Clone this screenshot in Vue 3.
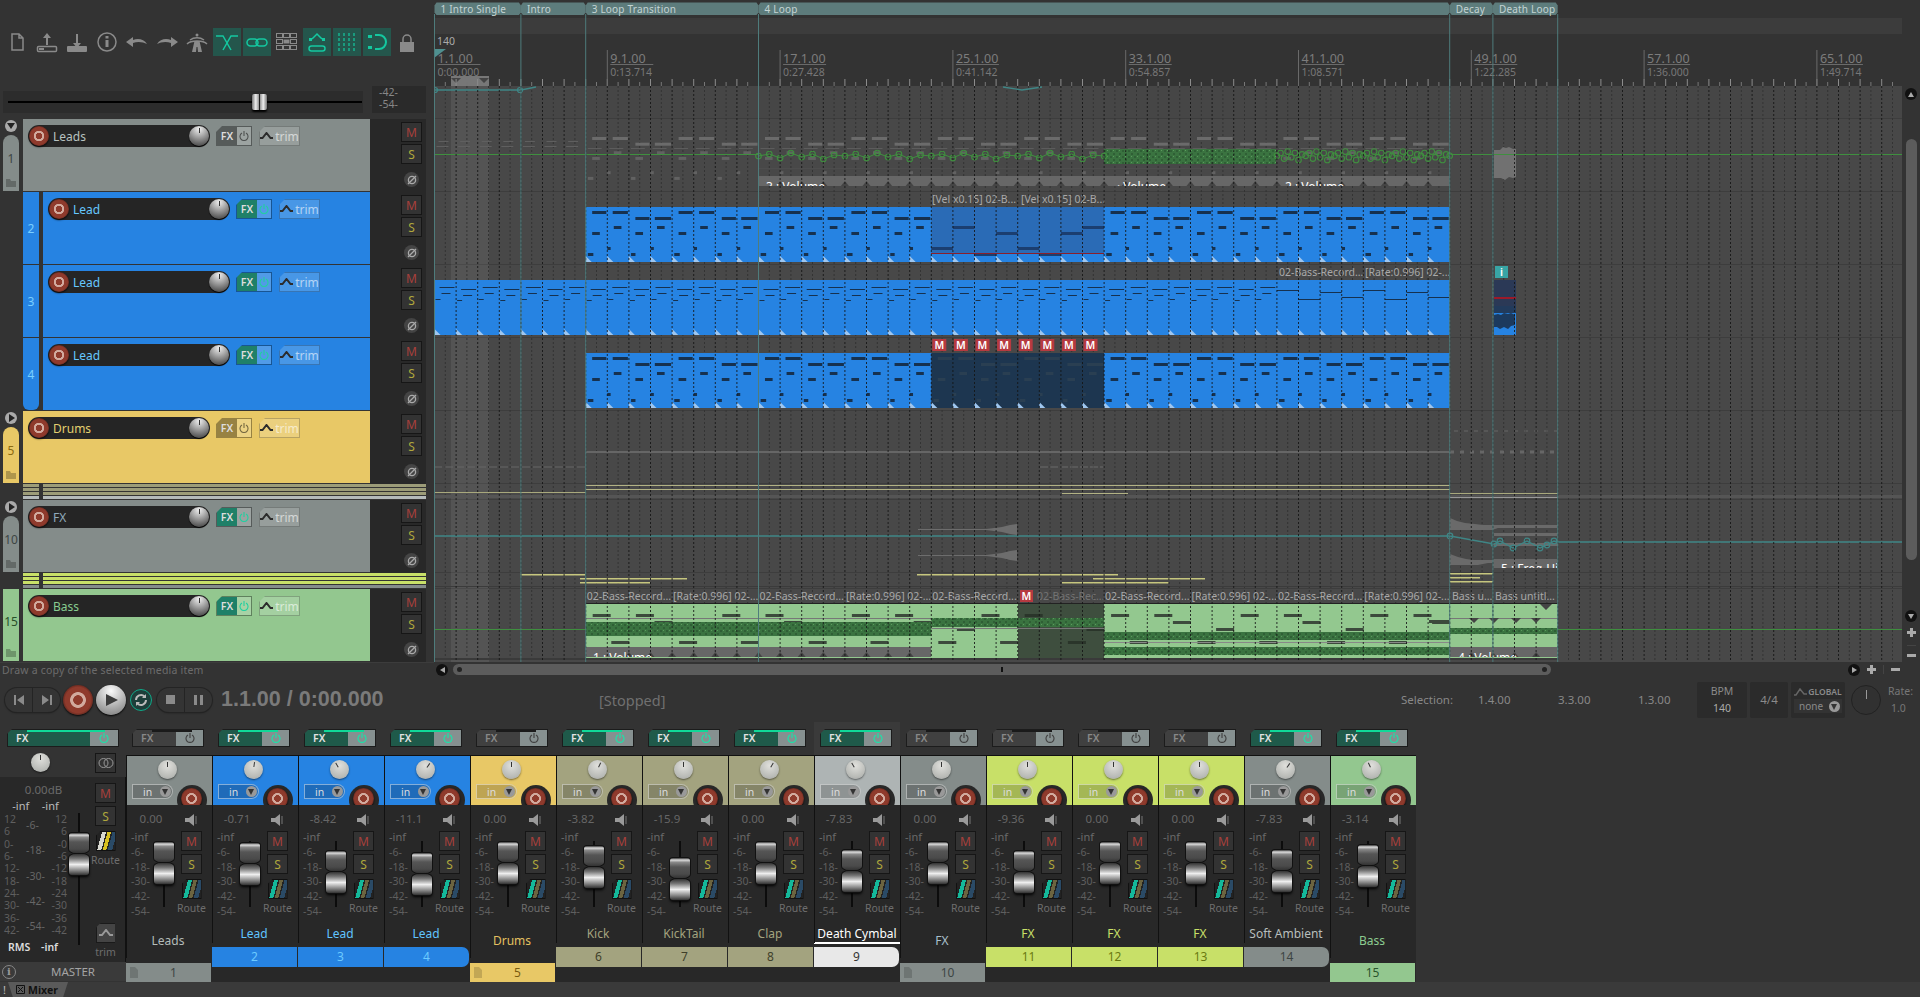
<template>
  <div class="app">
    <div class="main">
      <!-- left: toolbar + track panel -->
      <div class="left">
        <div class="toolbar">
          <div v-for="(ic, i) in toolIcons" :key="i" class="tool">
            <svg width="28" height="28" viewBox="0 0 28 28">
              <rect v-if="ic.on" width="28" height="28" fill="#24564c" />
              <g v-html="ic.svg"></g>
            </svg>
          </div>
        </div>
        <div class="master-row">
          <div class="master-fader">
            <div class="mf-line"></div>
            <div class="mf-handle"></div>
          </div>
          <div class="master-meter"><span>-42-</span><span>-54-</span></div>
        </div>
        <div class="tracks">
          <template v-for="t in tracks" :key="t.n">
            <div class="track">
              <div class="t-gutter">
                <template v-if="t.folder">
                  <div v-if="!t.bass" class="collapse"><i :class="{ closed: t.closed }"></i></div>
                  <div class="t-tab" :class="{ flat: t.bass }" :style="{ background: t.color, color: t.ink }">
                    <span>{{ t.n }}</span>
                    <svg class="fold" width="10" height="8" viewBox="0 0 10 8"><path d="M0 0h4l1 2h5v6H0z" fill="rgba(0,0,0,.25)" /></svg>
                  </div>
                </template>
              </div>
              <div v-if="!t.folder" class="t-num" :class="{ last: t.n === 4 }" :style="{ background: t.color, color: t.ink }">{{ t.n }}</div>
              <div class="t-panel" :class="{ child: !t.folder }" :style="{ background: t.color }">
                <div class="namebar">
                  <div class="rec small"></div>
                  <span class="tname" :style="{ color: t.nameColor }">{{ t.name }}</span>
                  <div class="knob dark"><i></i></div>
                </div>
                <div class="tfx" :class="{ active: t.fx }">
                  <b>FX</b>
                  <span><svg width="10" height="10" viewBox="0 0 10 10"><path d="M3 2a4 4 0 1 0 4 0M5 0v5" fill="none" stroke="currentColor" stroke-width="1.1" /></svg></span>
                </div>
                <div class="ttrim">
                  <svg width="13" height="8" viewBox="0 0 13 8"><path d="M0 6h2.5l4-5 4 5H13" fill="none" stroke="#2c2c2c" stroke-width="2" /></svg>
                  <span>trim</span>
                </div>
              </div>
              <div class="t-ms">
                <div class="btn m">M</div>
                <div class="btn s">S</div>
                <div class="phase"><svg width="10" height="10" viewBox="0 0 10 10"><circle cx="5" cy="5" r="3.6" fill="none" stroke="#aaa" stroke-width="1.3" /><path d="M1 9 9 1" stroke="#aaa" stroke-width="1.3" /></svg></div>
              </div>
            </div>
            <div v-if="t.kids" class="collapsed-kids">
              <div v-for="(c, k) in t.kids" :key="k" class="kid" :style="{ background: c }"><i></i></div>
            </div>
          </template>
        </div>
        <div class="hint">Draw a copy of the selected media item</div>
      </div>

      <!-- arrange view -->
      <div class="arrange">
        <svg class="canvas" width="1468" height="662" viewBox="434 0 1468 662">
          <defs>
            <clipPath v-for="(b, i) in bands" :id="'band' + i" :key="i"><rect :x="b.x1" :y="b.y" :width="b.x2 - b.x1" :height="b.h" /></clipPath>
            <pattern id="wave" width="6" height="6" patternUnits="userSpaceOnUse">
              <rect width="6" height="6" fill="#3a7340" />
              <rect x="0" y="0" width="2" height="2" fill="#2f5f35" />
              <rect x="3" y="3" width="2" height="2" fill="#2f5f35" />
              <rect x="3" y="0" width="1" height="1" fill="#5b9a5d" />
            </pattern>
          </defs>
          <!-- ruler -->
          <rect x="434" y="0" width="1468" height="86" fill="#333" />
          <rect x="434" y="18" width="1468" height="16" fill="#3c3c3c" />
          <rect x="434" y="86" width="1468" height="576" fill="#484848" />
          <rect x="434" y="86" width="1468" height="33" fill="#464646" />
          <rect v-for="y in laneLines" :key="y" x="434" :y="y" width="1468" height="1" fill="#3d3d3d" />
          <rect x="451" y="76" width="38" height="586" fill="#fff" opacity=".07" />
          <rect x="451" y="76" width="38" height="10" fill="#777" />
          <path d="M451 76h10l-5 5zM479 76h10l-5 5z" fill="#444" transform="translate(0 2)" />

          <g v-for="l in halfLines" :key="'h' + l">
            <line :x1="l" :x2="l" y1="82" y2="86" stroke="#777" />
            <line :x1="l" :x2="l" y1="86" y2="662" stroke="#333" stroke-dasharray="2 2" />
          </g>
          <g v-for="l in barLines" :key="'b' + l">
            <line :x1="l" :x2="l" y1="79" y2="86" stroke="#8c8c8c" />
          </g>
          <g v-for="r in rulerLabels" :key="r.label">
            <line :x1="r.x" :x2="r.x" y1="50" y2="86" stroke="#6a6a6a" />
            <text :x="r.x + 3" y="63" class="r1">{{ r.label }}</text>
            <rect :x="r.x + 3" y="64" width="43" height="1" fill="#6a6a6a" />
            <text :x="r.x + 3" y="76" class="r2">{{ r.time }}</text>
          </g>
          <text x="437" y="45" class="tempo">140</text>
          <path d="M434 49h12l-12 9z" fill="#4f9090" />

          <!-- faint folder peaks -->
          <rect v-for="(p, i) in peaks" :key="'p' + i" :x="p.x" :y="p.y" :width="p.w" :height="p.h" :fill="p.c" />
          <path d="M1494 150l6 0 3-3 3 1 3-1 4 2 3 0 0 28-3 1-4-1-4 3-4-2-7 0z" fill="#717171" />

          <!-- blue midi items -->
          <rect v-for="b in blue" :key="b.k" :x="b.x" :y="b.y" :width="b.w" :height="b.h" :fill="b.c" />
          <rect v-for="n in notes" :key="n.k" :x="n.x" :y="n.y" :width="n.w" :height="n.h" :fill="n.c" />
          <path v-for="t in fades" :key="t.k" :d="t.d" :fill="t.c" />
          <rect x="931" y="253" width="173" height="1" fill="#8a1f2c" />

          <text x="932" y="203" class="it">[Vel x0.15] 02-B...</text>
          <text x="1021" y="203" class="it">[Vel x0.15] 02-B...</text>
          <text x="1279" y="276" class="it">02-Bass-Record...</text>
          <text x="1365" y="276" class="it">[Rate:0.996] 02-...</text>

          <g v-for="x in muteBadges" :key="x">
            <rect :x="x" y="339" width="14" height="12" fill="#b63a40" />
            <text :x="x + 7" y="349" class="mm">M</text>
          </g>

          <!-- little clip on track 3 -->
          <rect x="1494" y="280" width="22" height="55" fill="#2683e2" />
          <rect x="1494" y="280" width="22" height="26" fill="#2b3956" />
          <rect x="1494" y="306" width="22" height="7" fill="#223b5c" />
          <rect x="1494" y="297" width="22" height="2" fill="#9c1a2a" />
          <path d="M1494 315l4-1 3 1 3-2 4 1 3-1 4 2v10l-4 1-3 3-4-2-4 2-3-2-3 0z" fill="#1c3a5e" />
          <rect x="1495" y="266" width="13" height="12" fill="#38a5a5" />
          <text x="1501.5" y="276" class="mm">i</text>

          <!-- drums lane -->
          <rect x="586" y="451" width="864" height="2" fill="#666" />
          <line x1="1450" x2="1556" y1="452" y2="452" stroke="#666" stroke-width="3" stroke-dasharray="4 6" />
          <line x1="1454" x2="1558" y1="431" y2="431" stroke="#666" stroke-dasharray="4 6" />
          <line x1="1040" x2="1104" y1="467" y2="467" stroke="#6a6a6a" stroke-dasharray="8 2" />
          <line x1="434" x2="586" y1="467" y2="467" stroke="#666" stroke-dasharray="8 3" />
          <rect x="586" y="485" width="864" height="1" fill="#b2b284" />
          <rect x="586" y="489" width="864" height="1" fill="#b2b284" />
          <rect x="434" y="495" width="1468" height="3" fill="#555" />
          <rect x="1450" y="493" width="108" height="1" fill="#a8a87c" />
          <rect x="1450" y="497" width="108" height="1" fill="#999" />
          <rect x="1062" y="493" width="66" height="1" fill="#b2b284" />
          <rect x="434" y="492" width="152" height="1" fill="#a8a87c" />

          <!-- fx lane -->
          <path d="M918 529h68l8-1 8-1 8-2 7-1v11l-7-1-8-2-8-1-8-1h-68z" fill="#6d6d6d" />
          <path d="M918 555h68l8-1 8-1 8-2 7-1v11l-7-1-8-2-8-1-8-1h-68z" fill="#6d6d6d" />
          <path d="M1450 518l7 3 8 2 10 1 8 1h75v3h-60l-6 2h-42z" fill="#6a6a6a" />
          <path d="M1450 572v-18l8 3 8 2 8 1h84v3h-70l-10 2h-28z" fill="#6a6a6a" />
          <rect x="1494" y="533" width="64" height="3" fill="#6a6a6a" />
          <rect x="1494" y="543" width="64" height="3" fill="#6a6a6a" />
          <polyline points="434,536 1450,536 1494,544 1500,541 1513,548 1527,541 1540,548 1547,545 1554,541 1558,542 1902,542" fill="none" stroke="#3f8686" stroke-width="1.3" />
          <circle v-for="p in fxPts" :key="p[0]" :cx="p[0]" :cy="p[1]" r="2.8" fill="none" stroke="#3f8686" stroke-width="1.2" />
          <rect v-for="(l, i) in yellow" :key="'y' + i" :x="l[0]" :y="l[2]" :width="l[1] - l[0]" height="1.5" fill="#c6c67e" />
          <rect x="434" y="586" width="1468" height="1" fill="#3b3b3b" />

          <!-- bass lane -->
          <rect x="586" y="604" width="972" height="54" fill="#93c88f" />
          <rect x="1018" y="604" width="86" height="54" fill="#3e4e3e" />
          <rect x="586" y="603" width="972" height="1" fill="#222" />
          <rect x="434" y="658" width="1124" height="2" fill="#3a3a3a" />
          <rect v-for="n in bassNotes" :key="n.k" :x="n.x" :y="n.y" :width="n.w" height="3" :fill="n.c" />
          <rect v-for="g in bassBands" :key="g.k" :x="g.x" :y="g.y" :width="g.w" :height="g.h" :fill="g.c" />
          <text v-for="l in bassLabels" :key="l.x" :x="l.x" y="600" class="it" :opacity="l.dim ? 0.45 : 1">{{ l.t }}</text>
          <rect x="1020" y="590" width="13" height="12" fill="#b63a40" />
          <text x="1026.5" y="600" class="mm">M</text>
          <path d="M1540 604h12l-6 6zM1469 618h10l-5 5zM1489 618h10l-5 5zM1511 618h10l-5 5zM1531 618h10l-5 5z" fill="#444" />

          <!-- automation -->
          <polyline points="434,90 521,90 536,87" fill="none" stroke="#3f8686" stroke-width="1.3" />
          <polyline points="1003,87 1022,90 1042,87" fill="none" stroke="#3f8686" stroke-width="1.3" />
          <circle cx="435" cy="90" r="2.5" fill="none" stroke="#3f8686" stroke-width="1.2" />
          <circle cx="520" cy="90" r="2.5" fill="none" stroke="#3f8686" stroke-width="1.2" />
          <rect x="434" y="154" width="325" height="1" fill="#3f8f3f" />
          <rect x="1450" y="154" width="452" height="1" fill="#3f8f3f" />
          <rect x="434" y="629" width="152" height="1" fill="#3f8f3f" />
          <rect x="1558" y="629" width="344" height="1" fill="#3f8f3f" />
          <rect x="1104" y="149" width="172" height="15" fill="url(#wave)" />
          <polyline :points="greenLine" fill="none" stroke="#3f8f3f" stroke-width="1" />
          <circle v-for="p in greenPts" :key="p[2]" :cx="p[0]" :cy="p[1]" r="2.8" fill="none" stroke="#3f8f3f" stroke-width="1.1" />

          <!-- envelope name bands, text cut by the band as in the original -->
          <g v-for="(b, i) in bands" :key="'v' + i" :clip-path="'url(#band' + i + ')'">
            <rect :x="b.x1" :y="b.y" :width="b.x2 - b.x1" :height="b.h" fill="#676767" />
            <path v-for="x in b.marks" :key="x" :d="`M${x - 4} ${b.y + b.h}l4 -5 4 5z`" fill="#444" />
            <text v-for="l in b.labels" :key="l[0]" :x="l[0]" :y="b.y + b.h + 5" class="vl">{{ l[1] }}</text>
          </g>

          <!-- grid on top -->
          <line v-for="l in barLines" :key="'g' + l" :x1="l" :x2="l" y1="86" y2="662" stroke="#141414" stroke-dasharray="2 2" opacity=".85" />

          <!-- region markers -->
          <line v-for="x in regionLines" :key="'r' + x" :x1="x" :x2="x" y1="14" y2="662" stroke="#4e7c7c" />
          <g v-for="r in regions" :key="r.label">
            <path :d="`M${r.x1 + 2} 2.5H${r.x2 - 2}l2 3v7l-2 2.5H${r.x1 + 2}l-2 -2.5v-7z`" fill="#5d7c7c" />
            <text :x="r.x1 + 6" y="12.5" class="reg">{{ r.label }}</text>
          </g>
        </svg>

        <div class="hscroll">
          <div class="round"><i class="tl"></i></div>
          <div class="hbar">
            <em class="dot"></em>
            <u class="hmid"></u>
            <em class="dot"></em>
          </div>
          <div class="round play"><i class="tr"></i></div>
          <div class="plus"></div>
          <div class="vsep"></div>
          <div class="minus"></div>
        </div>
      </div>

      <div class="vscroll">
        <div class="round up"><i class="tu"></i></div>
        <div class="vbar"></div>
        <div class="round down"><i class="td"></i></div>
        <div class="plus"></div>
        <div class="hsep"></div>
        <div class="minus"></div>
      </div>
    </div>

    <!-- transport -->
    <div class="transport">
      <div class="tgroup first">
        <span><svg width="12" height="12" viewBox="0 0 12 12"><path d="M1 1h2v10H1zM11 1v10L4 6z" fill="#8a8a8a" /></svg></span>
        <span><svg width="12" height="12" viewBox="0 0 12 12"><path d="M1 1v10l7-5zM9 1h2v10H9z" fill="#8a8a8a" /></svg></span>
      </div>
      <div class="rec big"></div>
      <div class="playbtn"><svg width="14" height="14" viewBox="0 0 14 14"><path d="M1 1l12 6-12 6z" fill="#3c3c3c" /></svg></div>
      <div class="loopbtn"><svg width="14" height="14" viewBox="0 0 14 14"><path d="M2 7a5 5 0 0 1 8.5-3.5M12 7a5 5 0 0 1-8.5 3.5" fill="none" stroke="#bbb" stroke-width="2" /><path d="M12 1v4H8zM2 13V9h4z" fill="#bbb" /></svg></div>
      <div class="tgroup">
        <span><i class="stop"></i></span>
        <span><i class="pause"></i></span>
      </div>
      <div class="bigtime">1.1.00 / 0:00.000</div>
      <div class="stopped">[Stopped]</div>
      <div class="sel sel-l">Selection:</div>
      <div class="sel s1">1.4.00</div>
      <div class="sel s2">3.3.00</div>
      <div class="sel s3">1.3.00</div>
      <div class="box bpm"><span>BPM</span><span class="lt">140</span></div>
      <div class="box sig">4/4</div>
      <div class="box glob">
        <div class="g1"><svg width="13" height="8" viewBox="0 0 13 8"><path d="M0 7h2l4-6 4 5h3" fill="none" stroke="#666" stroke-width="1.5" /></svg><b>GLOBAL</b></div>
        <div class="g2"><span>none</span><i class="caret"></i></div>
      </div>
      <div class="rateknob"><i></i></div>
      <div class="rate"><span>Rate:</span><span class="rv">1.0</span></div>
    </div>

    <!-- mixer -->
    <div class="mixer">
      <div class="m-master">
        <div class="fx-slot"><div class="mfx wide active"><b>FX</b><span><svg width="10" height="10" viewBox="0 0 10 10"><path d="M3 2a4 4 0 1 0 4 0M5 0v5" fill="none" stroke="currentColor" stroke-width="1.2" /></svg></span><em></em></div></div>
        <div class="m-top">
          <div class="knob metal"><i></i></div>
          <div class="btn stereo"><svg width="16" height="10" viewBox="0 0 16 10"><circle cx="5.5" cy="5" r="4.5" fill="none" stroke="#999" /><circle cx="10.5" cy="5" r="4.5" fill="none" stroke="#999" /></svg></div>
        </div>
        <div class="m-body">
          <div class="m-left">
            <div class="db">0.00dB</div>
            <div class="inf-row"><span>-inf</span><span>-inf</span></div>
            <div class="m-scale">
              <div class="sc"><span v-for="s in masterL" :key="s">{{ s }}</span></div>
              <div class="sc mid"><span v-for="s in masterM" :key="s">{{ s }}</span></div>
              <div class="sc right"><span v-for="s in masterR" :key="s">{{ s }}</span></div>
            </div>
            <div class="rms-row"><b>RMS</b><b>-inf</b></div>
          </div>
          <div class="m-fader"><div class="fader-track"></div><div class="fader" style="top: 56px"><div class="cap-t"></div><div class="cap-b"></div></div></div>
          <div class="m-right">
            <div class="btn m">M</div>
            <div class="btn s">S</div>
            <div class="route master-route"></div>
            <div class="route-l">Route</div>
            <div class="spacer"></div>
            <div class="trimbtn"><svg width="14" height="8" viewBox="0 0 14 8"><path d="M0 6h3l4-5 4 5h3" fill="none" stroke="#999" stroke-width="2" /></svg></div>
            <div class="route-l">trim</div>
          </div>
        </div>
        <div class="m-name">
          <div class="info">i</div>
          <span>MASTER</span>
        </div>
      </div>

      <div v-for="c in channels" :key="c.n" class="ch" :class="{ folder: c.folder, sel: c.sel }">
        <div class="fx-slot"><div class="mfx" :class="{ active: c.fx }"><b>FX</b><span><svg width="10" height="10" viewBox="0 0 10 10"><path d="M3 2a4 4 0 1 0 4 0M5 0v5" fill="none" stroke="currentColor" stroke-width="1.2" /></svg></span><em></em></div></div>
        <div class="ch-head" :style="{ background: c.color }">
          <div class="knob metal"><i :style="{ transform: `rotate(${c.pan}deg)` }"></i></div>
          <div class="in-pill"><span>in</span><i class="caret"></i></div>
          <div class="notch"></div>
        </div>
        <div class="rec chrec"></div>
        <div class="ch-body">
          <div class="ch-top">
            <span class="vol">{{ c.vol }}</span>
            <svg class="spk" width="12" height="12" viewBox="0 0 12 12"><path d="M0 4h4l5-4v12L4 8H0z" fill="#9a9a9a" /><rect x="10.5" y="2" width="1" height="8" fill="#777" /></svg>
          </div>
          <div class="ch-mid">
            <div class="scale"><span v-for="s in scale" :key="s">{{ s }}</span></div>
            <div class="ch-fader">
              <div class="fader-track"></div>
              <div class="fader" :style="{ top: c.fader - 831 + 'px' }"><div class="cap-t"></div><div class="cap-b"></div></div>
            </div>
            <div class="ch-btns">
              <div class="btn m">M</div>
              <div class="btn s">S</div>
              <div class="route"></div>
              <div class="route-l">Route</div>
            </div>
          </div>
          <div class="ch-bottom">
            <div class="ch-name" :class="{ under: c.sel }" :style="{ color: c.nameColor }">{{ c.name }}</div>
            <div class="band" :class="{ rounded: c.last, hasfold: c.folder && c.n !== 15 }" :style="{ background: c.band || c.color, color: c.ink }">
              <svg v-if="c.folder && c.n !== 15" class="fold" width="8" height="11" viewBox="0 0 8 11"><path d="M0 0h5l3 3v8H0z" fill="rgba(0,0,0,.16)" /></svg>
              {{ c.n }}
            </div>
          </div>
        </div>
      </div>
    </div>

    <div class="tabs">
      <span class="bang">!</span>
      <div class="tab">
        <svg width="9" height="9" viewBox="0 0 9 9"><path d="M.5.5h8v8h-8zM2 2l5 5M7 2 2 7" fill="none" stroke="#111" /></svg>
        <b>Mixer</b>
      </div>
    </div>
  </div>
</template>

<script setup>
const X0 = 434.5
const BAR = 21.6
const bx = (b) => X0 + b * BAR

const GRAY = '#848c8a'
const BLUE = '#2683e2'
const YEL = '#e8c866'
const OLIVE = '#a3a37f'
const LIME = '#c8e068'
const GREEN = '#93c78f'

const tg = 'stroke="#8a8a8a" fill="none" stroke-width="1.5"'
const gf = 'fill="#8a8a8a"'
const ac = 'stroke="#14c8a0" fill="none" stroke-width="2"'
const toolIcons = [
  { svg: `<path d="M9 6h7l4 4v12H9zM16 6v4h4" ${tg}/>` },
  { svg: `<path d="M14 5l-4 5h3v7h2v-7h3z" ${gf}/><rect x="4.5" y="18.5" width="19" height="5" rx="1" ${tg}/><rect x="6" y="20" width="5" height="2" ${gf}/>` },
  { svg: `<path d="M14 20l-4-5h3V6h2v9h3z" ${gf}/><rect x="4" y="18" width="20" height="6" rx="1" ${gf}/>` },
  { svg: `<circle cx="14" cy="14" r="9" ${tg}/><rect x="12.5" y="12" width="3" height="7" ${gf}/><rect x="12.5" y="8" width="3" height="2.5" ${gf}/>` },
  { svg: `<path d="M3 14l7-5v3c5-2 11-1 14 4-4-2-9-3-14-1v4z" ${gf}/>` },
  { svg: `<path d="M25 14l-7-5v3c-5-2-11-1-14 4 4-2 9-3 14-1v4z" ${gf}/>` },
  { svg: `<path d="M4 16c4-4 16-4 20 0M7 12c4-3 10-3 14 0" ${tg}/><path d="M11.5 13h5l2.5 11h-4l-.5-5h-1l-.5 5H9z" ${gf}/><circle cx="14" cy="7" r="1.5" ${gf}/>` },
  { on: true, svg: `<path d="M3 8h7l8 14M25 8h-7L10 22" stroke="#14c8a0" fill="none" stroke-width="1.5"/>` },
  { on: true, svg: `<rect x="4" y="11" width="11" height="7" rx="3.5" stroke="#14c8a0" fill="none" stroke-width="1.5"/><rect x="13" y="11" width="11" height="7" rx="3.5" stroke="#14c8a0" fill="none" stroke-width="1.5"/>` },
  { svg: [6, 13, 20].flatMap((x) => [7, 13, 19].map((y) => `<rect x="${x - 2.5}" y="${y - 1.5}" width="6" height="4" ${x === 13 && y === 13 ? gf : 'fill="none" stroke="#8a8a8a"'}/>`)).join('') },
  { on: true, svg: `<path d="M9 11l5-5 5 5" stroke="#14c8a0" fill="none" stroke-width="1.5"/><rect x="6" y="10" width="3" height="3" fill="#14c8a0"/><rect x="19" y="10" width="3" height="3" fill="#14c8a0"/><rect x="6" y="18" width="16" height="5" rx="2.5" stroke="#14c8a0" fill="none" stroke-width="1.5"/>` },
  { on: true, svg: [6, 11, 16, 21].map((x) => `<line x1="${x}" x2="${x}" y1="5" y2="24" stroke="#14c8a0" stroke-width="1.2" stroke-dasharray="3 2"/>`).join('') },
  { on: true, svg: `<path d="M12 7h4a7 7 0 0 1 0 14h-4" ${ac} stroke-width="3"/><rect x="5" y="7" width="4" height="3" fill="#14c8a0"/><rect x="5" y="18" width="4" height="3" fill="#14c8a0"/>` },
  { svg: `<path d="M10 14v-3a4 4 0 0 1 8 0v3" ${tg} stroke-width="2"/><rect x="7" y="14" width="14" height="10" ${gf}/>` }
]

const tracks = [
  { n: 1, name: 'Leads', color: GRAY, ink: '#3d4544', nameColor: '#b8c2c0', folder: true },
  { n: 2, name: 'Lead', color: BLUE, ink: '#79cfff', nameColor: '#66c8ff', fx: true },
  { n: 3, name: 'Lead', color: BLUE, ink: '#79cfff', nameColor: '#66c8ff', fx: true },
  { n: 4, name: 'Lead', color: BLUE, ink: '#79cfff', nameColor: '#66c8ff', fx: true },
  { n: 5, name: 'Drums', color: YEL, ink: '#8a6a10', nameColor: '#e4d070', folder: true, closed: true, kids: ['#9c9c78', '#9c9c78', '#9c9c78', '#b4baba'] },
  { n: 10, name: 'FX', color: GRAY, ink: '#3d4544', nameColor: '#90aabb', folder: true, closed: true, fx: true, kids: [LIME, LIME, LIME, GRAY] },
  // bass is a plain track, its number still sits in the outer gutter
  { n: 15, name: 'Bass', color: GREEN, ink: '#28502a', nameColor: '#88cc90', folder: true, bass: true, fx: true }
]

const laneLines = [118, 191, 264, 337, 410, 483, 499, 572, 588]

const barLines = []
const halfLines = []
for (let b = 0; b <= 68; b++) {
  barLines.push(bx(b))
  if (b < 68) halfLines.push(bx(b + 0.5))
}
const times = ['0:00.000', '0:13.714', '0:27.428', '0:41.142', '0:54.857', '1:08.571', '1:22.285', '1:36.000', '1:49.714']
const rulerLabels = times.map((t, i) => ({ x: bx(i * 8), label: `${i * 8 + 1}.1.00`, time: t }))

const regions = [
  { x1: bx(0), x2: bx(4), label: '1  Intro Single' },
  { x1: bx(4), x2: bx(7), label: 'Intro' },
  { x1: bx(7), x2: bx(15), label: '3  Loop Transition' },
  { x1: bx(15), x2: bx(47), label: '4  Loop' },
  { x1: bx(47), x2: bx(49), label: 'Decay' },
  { x1: bx(49), x2: bx(52), label: 'Death Loop' }
]
const regionLines = [0, 4, 7, 15, 47, 49, 52].map(bx)

// four bar riff, offsets are from the item top
const riff = [
  [[0.25, 0.75, 4], [0.3, 0.4, 19], [0, 0.2, 40]],
  [[0.3, 0.7, 10], [0.3, 0.4, 25], [0.1, 0.25, 46]],
  [[0.2, 0.8, 10], [0.3, 0.4, 19], [0, 0.2, 40]],
  [[0.3, 0.7, 4], [0.3, 0.4, 25], [0.1, 0.3, 46]]
]
const DARKNOTE = '#16314f'
const blue = []
const notes = []
const fades = []
function midiLane(key, top, from, to, skip) {
  blue.push({ k: key, x: bx(from), y: top, w: bx(to) - bx(from), h: 55, c: BLUE })
  for (let b = from; b < to; b++) {
    fades.push({ k: `${key}f${b}`, d: `M${bx(b)} ${top + 55}v-6l6 6z`, c: '#9fc6ee' })
    if (skip && b >= skip[0] && b < skip[1]) continue
    riff[b % 4].forEach((n, i) => {
      notes.push({ k: `${key}${b}_${i}`, x: bx(b) + n[0] * BAR, y: top + n[2], w: n[1] * BAR - 1, h: 3, c: DARKNOTE })
    })
  }
}
midiLane('a', 207, 7, 47, [23, 31])
midiLane('c', 353, 7, 47, [23, 31])
blue.push({ k: 'a-dark', x: bx(23), y: 207, w: BAR * 8, h: 46, c: '#2a6bb6' })
blue.push({ k: 'c-dark', x: bx(23), y: 353, w: BAR * 8, h: 55, c: '#1d3650' })
const velNotes = [[0, 247], [1, 226], [2, 253], [3, 232], [4, 247], [5, 253], [6, 232], [7, 226]]
velNotes.forEach(([i, y]) => notes.push({ k: `v${i}`, x: bx(23 + i), y, w: BAR, h: 3, c: '#1b3e70' }))
for (let b = 23; b < 31; b++) {
  riff[b % 4].forEach((n, i) => notes.push({ k: `cd${b}_${i}`, x: bx(b) + n[0] * BAR, y: 353 + n[2], w: n[1] * BAR - 1, h: 3, c: '#2a3f52' }))
}
// track 3 has thin notes all the way, long ones at the end
blue.push({ k: 'b', x: bx(0), y: 280, w: BAR * 47, h: 55, c: BLUE })
for (let b = 0; b < 47; b++) {
  fades.push({ k: `bf${b}`, d: `M${bx(b)} 335v-6l6 6z`, c: '#9fc6ee' })
  if (b < 39) {
    const v = b % 2
    notes.push({ k: `b${b}a`, x: bx(b) + 5, y: 287 + v * 2, w: 15, h: 1, c: DARKNOTE })
    notes.push({ k: `b${b}b`, x: bx(b) + 7, y: 293 + v * 2, w: 9, h: 1, c: DARKNOTE })
    notes.push({ k: `b${b}c`, x: bx(b) + 1, y: 299 + v, w: 5, h: 1, c: DARKNOTE })
  } else {
    notes.push({ k: `b${b}a`, x: bx(b), y: [299, 292, 297, 290][b % 4], w: BAR, h: 1, c: DARKNOTE })
  }
}
const muteBadges = []
for (let b = 23; b < 31; b++) muteBadges.push(bx(b) + 1)

// composite peaks on the collapsed Leads folder
const peaks = []
for (let b = 0; b < 47; b++) {
  if (b < 7) {
    peaks.push({ x: bx(b) + 4, y: 141, w: 10, h: 1, c: '#5f5f5f' })
    peaks.push({ x: bx(b) + 2, y: 146, w: 12, h: 1, c: '#5f5f5f' })
    continue
  }
  riff[b % 4].forEach((n, i) => {
    peaks.push({ x: bx(b) + n[0] * BAR, y: 137 + (n[2] - 4) * 0.95, w: n[1] * BAR - 1, h: 3, c: i === 0 ? '#6b6b6b' : '#626262' })
  })
  peaks.push({ x: bx(b) + 2, y: 148, w: 14, h: 1, c: '#5c5c5c' })
}
peaks.push({ x: bx(15), y: 168, w: bx(47) - bx(15), h: 1, c: '#4d4d4d' })

const greenPts = []
const wob = [2, 0, 4, -1, 3, 0, 5, 1]
for (let x = bx(15), i = 0; x < bx(31); x += 10.8, i++) {
  greenPts.push([x, 154 + wob[i % 8], `g${i}`])
}
for (let x = bx(39), i = 0; x < bx(47); x += 3.6, i++) {
  greenPts.push([x, 153 + wob[i % 8] * 1.4, `h${i}`])
}
const greenLine = greenPts.filter((p) => p[0] < bx(31)).map((p) => `${p[0]},${p[1]}`).join(' ')
const fxPts = [[1450, 536], [1494, 544], [1500, 541], [1513, 548], [1527, 541], [1540, 548], [1547, 545], [1554, 541]]

const yellow = [
  [520, 586, 574], [580, 687, 578], [580, 650, 582],
  [917, 1118, 574], [1093, 1205, 578], [1062, 1169, 582],
  [1450, 1493, 573], [1450, 1480, 577], [1450, 1493, 581]
]

const marks = (from, to) => {
  const out = []
  for (let b = from; b <= to; b++) out.push(bx(b))
  return out
}
const bands = [
  { x1: bx(15), x2: bx(47), y: 176, h: 10, marks: marks(16, 46), labels: [[766, '3 : Volume'], [1117, '· Volume'], [1285, '2 : Volume']] },
  { x1: bx(7), x2: bx(23), y: 647, h: 10, marks: marks(9, 22), labels: [[593, '1 : Volume']] },
  { x1: bx(47), x2: bx(52), y: 647, h: 10, marks: marks(48, 51), labels: [[1458, '4 : Volume']] },
  { x1: bx(49), x2: bx(52), y: 559, h: 9, marks: [], labels: [[1501, '5 : Freq-Hi']] }
]

const bassLabels = []
for (let s = 0; s < 10; s++) {
  const a = 7 + s * 4
  const parity = s % 2 === 0
  if (a === 27) continue
  bassLabels.push({ x: bx(a) + 1, t: parity ? '02-Bass-Record...' : '[Rate:0.996] 02-...' })
}
bassLabels.push({ x: 1037, t: '02-Bass-Rec...', dim: true })
bassLabels.push({ x: 1452, t: 'Bass u...' })
bassLabels.push({ x: 1495, t: 'Bass untitl...' })

const bassNotes = []
const bRows = [614, 641, 614, 621, 641, 628]
for (let b = 7; b < 47; b++) {
  const i = b % 2
  const dim = b >= 27 && b < 31
  bassNotes.push({ k: `n${b}`, x: bx(b) + 4 + i * 3, y: bRows[(b - 7) % 6], w: 18, c: dim ? '#2a352a' : '#3c4a3c' })
}
bassNotes.push({ k: 'nz', x: 1429, y: 620, w: 20, c: '#3c4a3c' })
const bassBands = [
  { k: 'w1', x: bx(7), y: 622, w: bx(23) - bx(7), h: 14, c: 'url(#wave)' },
  { k: 'w1t', x: bx(7), y: 618, w: bx(23) - bx(7), h: 1, c: '#777' },
  { k: 'w2', x: bx(23), y: 618, w: bx(31) - bx(23), h: 9, c: 'url(#wave)' },
  { k: 'w2t', x: bx(23), y: 628, w: bx(31) - bx(23), h: 1, c: '#777' },
  { k: 'w3', x: bx(31), y: 632, w: bx(47) - bx(31), h: 8, c: 'url(#wave)' },
  { k: 'w3t', x: bx(31), y: 642, w: bx(47) - bx(31), h: 1, c: '#888' },
  { k: 'w4', x: bx(31), y: 647, w: bx(47) - bx(31), h: 8, c: 'url(#wave)' },
  { k: 'w5', x: bx(47), y: 628, w: bx(52) - bx(47), h: 6, c: 'url(#wave)' },
  { k: 'w6', x: bx(47), y: 618, w: bx(52) - bx(47), h: 1, c: '#777' }
]

const scale = ['-inf', '-6-', '-18-', '-30-', '-42-', '-54-']
const masterL = ['12', '6', '0-', '6-', '12-', '18-', '24-', '30-', '36-', '42-']
const masterM = ['-6-', '-18-', '-30-', '-42-', '-54-']
const masterR = ['12', '6', '-0', '-6', '-12', '-18', '-24', '-30', '-36', '-42']

const channels = [
  { n: 1, name: 'Leads', color: GRAY, ink: '#3d4544', nameColor: '#b4bcba', folder: true, vol: '0.00', pan: 0, fader: 842 },
  { n: 2, name: 'Lead', color: BLUE, ink: '#6ccaff', nameColor: '#60c4ff', fx: true, vol: '-0.71', pan: 8, fader: 843 },
  { n: 3, name: 'Lead', color: BLUE, ink: '#6ccaff', nameColor: '#60c4ff', fx: true, vol: '-8.42', pan: -30, fader: 851 },
  { n: 4, name: 'Lead', color: BLUE, ink: '#6ccaff', nameColor: '#60c4ff', fx: true, last: true, vol: '-11.1', pan: 35, fader: 853 },
  { n: 5, name: 'Drums', color: YEL, ink: '#7a5c10', nameColor: '#e4c060', folder: true, vol: '0.00', pan: 0, fader: 842 },
  { n: 6, name: 'Kick', color: OLIVE, ink: '#3f3f2a', nameColor: '#a3a37f', fx: true, vol: '-3.82', pan: 25, fader: 846 },
  { n: 7, name: 'KickTail', color: OLIVE, ink: '#3f3f2a', nameColor: '#a3a37f', fx: true, vol: '-15.9', pan: 0, fader: 858 },
  { n: 8, name: 'Clap', color: OLIVE, ink: '#3f3f2a', nameColor: '#a3a37f', fx: true, vol: '0.00', pan: 30, fader: 842 },
  { n: 9, name: 'Death Cymbal', color: '#aeb4b4', band: '#e8e8e8', ink: '#333', nameColor: '#fff', fx: true, sel: true, last: true, vol: '-7.83', pan: -30, fader: 850 },
  { n: 10, name: 'FX', color: GRAY, ink: '#3d4544', nameColor: '#a8c0cc', folder: true, vol: '0.00', pan: 0, fader: 842 },
  { n: 11, name: 'FX', color: LIME, ink: '#6a7a10', nameColor: '#c8e068', vol: '-9.36', pan: 0, fader: 851 },
  { n: 12, name: 'FX', color: LIME, ink: '#6a7a10', nameColor: '#c8e068', vol: '0.00', pan: 0, fader: 842 },
  { n: 13, name: 'FX', color: LIME, ink: '#6a7a10', nameColor: '#c8e068', vol: '0.00', pan: 0, fader: 842 },
  { n: 14, name: 'Soft Ambient', color: GRAY, ink: '#3d4544', nameColor: '#b8bfbd', fx: true, last: true, vol: '-7.83', pan: 35, fader: 850 },
  { n: 15, name: 'Bass', color: GREEN, ink: '#2a552c', nameColor: '#8ccc90', folder: true, fx: true, vol: '-3.14', pan: -25, fader: 845 }
]
</script>

<style scoped>
.app {
  width: 1920px;
  height: 997px;
  background: #333;
  overflow: hidden;
  font-family: "Noto Sans", "DejaVu Sans", sans-serif;
  font-size: 12px;
  color: #8a8a8a;
}
.main { display: flex; height: 677px; }

/* left panel */
.left { width: 434px; flex: none; display: flex; flex-direction: column; }
.toolbar { height: 86px; display: flex; padding: 28px 0 0 3px; box-sizing: border-box; }
.tool { width: 30px; height: 28px; }
.master-row { height: 33px; display: flex; }
.master-fader { width: 360px; height: 22px; margin: 5px 0 0 3px; background: #2c2c2c; position: relative; }
.mf-line { position: absolute; left: 5px; right: 1px; top: 10px; height: 2px; background: #000; }
.mf-handle {
  position: absolute; left: 249px; top: 3px; width: 15px; height: 16px; border-radius: 2px;
  background: linear-gradient(90deg, #777, #eee 25%, #999 45%, #222 50%, #999 55%, #eee 75%, #777);
  box-shadow: 0 2px 2px #000;
}
.master-meter {
  width: 54px; height: 27px; margin-left: 9px; background: #2a2a2a; color: #888; font-size: 10.5px;
  display: flex; flex-direction: column; padding-left: 7px; box-sizing: border-box; justify-content: flex-end; line-height: 12px; padding-bottom: 3px;
}
.tracks { width: 426px; height: 543px; flex: none; display: flex; flex-direction: column; }
.track { height: 73px; display: flex; flex: none; }
.t-gutter { width: 16px; margin: 0 4px 0 3px; flex: none; display: flex; flex-direction: column; align-items: center; }
.collapse { width: 12px; height: 12px; border-radius: 50%; background: #aaa; margin: 1px 0 3px; display: flex; align-items: center; justify-content: center; }
.collapse i { width: 0; height: 0; border-left: 4px solid transparent; border-right: 4px solid transparent; border-top: 6px solid #222; }
.collapse i.closed { border-top: 4px solid transparent; border-bottom: 4px solid transparent; border-left: 6px solid #222; border-right: 0; margin-left: 2px; }
.t-tab { flex: 1; width: 16px; margin-bottom: 1px; border-radius: 8px 8px 0 0; font-size: 12px; display: flex; flex-direction: column; align-items: center; justify-content: flex-end; }
.t-tab.flat { border-radius: 0; }
.t-tab span { margin-bottom: 12px; }
.t-tab.flat span { margin-bottom: 19px; }
.t-tab .fold { margin-bottom: 4px; }
.t-num { width: 16px; margin-bottom: 1px; font-size: 12px; display: flex; align-items: center; justify-content: center; flex: none; }
.t-num.last { border-radius: 0 0 6px 6px; }
.t-panel { flex: 1; margin-bottom: 1px; display: flex; align-items: flex-start; padding: 6px 0 0 5px; box-sizing: border-box; position: relative; }
.t-panel.child { margin-left: 4px; }
.namebar { width: 182px; height: 22px; border-radius: 11px; background: #252525; display: flex; align-items: center; flex: none; }
.tname { flex: 1; margin-left: 4px; font-size: 12px; }
.t-ms { width: 56px; flex: none; background: #282828; padding: 3px 4px 0 31px; box-sizing: border-box; display: flex; flex-direction: column; align-items: center; gap: 2px; }
.phase { width: 15px; height: 15px; border-radius: 50%; background: #444; margin-top: 6px; display: flex; align-items: center; justify-content: center; flex: none; }
.btn {
  width: 21px; height: 20px; flex: none; box-sizing: border-box; border: 1px solid #161616; background: #333;
  display: flex; align-items: center; justify-content: center; font-size: 12px;
}
.btn.m { color: #a8403c; }
.btn.s { color: #b0a83c; }

.rec {
  flex: none; border-radius: 50%;
  background: radial-gradient(circle closest-side, #8f3a2c 0 30%, #d2aa9e 34% 50%, #8f3a2c 55% 85%, #6a2a20 100%);
  box-shadow: 0 1px 2px rgba(0, 0, 0, .9);
}
.rec.small { width: 20px; height: 20px; margin-left: 1px; }
.rec.big { width: 30px; height: 30px; margin-left: 3px; }
.knob { border-radius: 50%; flex: none; position: relative; }
.knob i { position: absolute; left: 50%; top: 2px; width: 1px; height: 5px; margin-left: -.5px; background: #333; transform-origin: 50% 7.5px; }
.knob.dark { width: 20px; height: 20px; margin-right: 1px; background: radial-gradient(circle at 50% 15%, #eee, #888 55%, #333 100%); box-shadow: 0 1px 1px #000; }
.knob.metal { width: 19px; height: 19px; background: radial-gradient(circle at 50% 30%, #e0e0dc, #b8bab6 70%, #999); box-shadow: 0 1px 2px rgba(0, 0, 0, .5); }
.tfx {
  width: 36px; height: 20px; margin: 1px 0 0 6px; box-sizing: border-box; display: flex; border: 1px solid rgba(0, 0, 0, .35);
  clip-path: polygon(6px 0, 100% 0, 100% 100%, 0 100%, 0 6px);
}
.tfx b { width: 20px; background: rgba(0, 0, 0, .35); color: #ddd; font-size: 10.5px; display: flex; align-items: center; justify-content: center; font-weight: 600; }
.tfx span { flex: 1; background: rgba(255, 255, 255, .2); display: flex; align-items: center; justify-content: center; color: rgba(0, 0, 0, .5); }
.tfx.active b { background: #1f8068; }
.tfx.active span { color: #22d0a0; }
.ttrim {
  width: 41px; height: 20px; margin: 1px 0 0 7px; box-sizing: border-box; border: 1px solid rgba(0, 0, 0, .22); background: rgba(255, 255, 255, .16);
  clip-path: polygon(6px 0, 100% 0, 100% 100%, 0 100%, 0 6px);
  display: flex; align-items: center; justify-content: center; gap: 2px; color: rgba(255, 255, 255, .6); font-size: 12px;
}
.collapsed-kids { height: 16px; flex: none; display: flex; flex-direction: column; gap: 1px; margin: -1px 0 0 23px; padding-top: 1px; overflow: hidden; }
.kid { height: 3px; flex: none; position: relative; }
.kid i { position: absolute; left: 16px; width: 4px; top: 0; bottom: 0; background: #333; }
.hint { height: 15px; font-size: 10.5px; line-height: 15px; padding-left: 2px; color: #6c6c6c; letter-spacing: .2px; border-top: 1px solid #3c3c3c; box-sizing: border-box; }

/* arrange */
.arrange { width: 1468px; flex: none; }
.canvas { display: block; }
.r1 { fill: #7c7c7c; font-size: 12.5px; }
.r2 { fill: #777; font-size: 10.5px; }
.tempo { fill: #aaa; font-size: 10.5px; }
.it { fill: #a8a8a8; font-size: 10.5px; }
.mm { fill: #fff; font-size: 10.5px; font-weight: 600; text-anchor: middle; }
.vl { fill: #fff; font-size: 12px; }
.reg { fill: #c4d4d4; font-size: 10px; letter-spacing: .2px; }
.hscroll { height: 15px; display: flex; align-items: center; }
.round { width: 12px; height: 12px; border-radius: 50%; background: #111; display: flex; align-items: center; justify-content: center; flex: none; }
.hscroll .round:first-child { margin-left: 2px; }
.tl { border-top: 3px solid transparent; border-bottom: 3px solid transparent; border-right: 5px solid #aaa; }
.tr { border-top: 3px solid transparent; border-bottom: 3px solid transparent; border-left: 5px solid #aaa; }
.tu { border-left: 3px solid transparent; border-right: 3px solid transparent; border-bottom: 5px solid #aaa; }
.td { border-left: 3px solid transparent; border-right: 3px solid transparent; border-top: 5px solid #aaa; }
.hbar { width: 1098px; height: 11px; margin-left: 5px; border-radius: 6px; background: #5c5c5c; display: flex; align-items: center; justify-content: space-between; padding: 0 4px; box-sizing: border-box; position: relative; }
.dot { width: 5px; height: 5px; border-radius: 50%; background: #222; }
.hmid { width: 2px; height: 5px; background: #111; }
.hscroll .play { margin-left: 297px; }
.plus { width: 9px; height: 9px; margin-left: 7px; flex: none; background: linear-gradient(#aaa, #aaa) center / 9px 3px no-repeat, linear-gradient(#aaa, #aaa) center / 3px 9px no-repeat; }
.minus { width: 9px; height: 3px; margin-left: 7px; background: #aaa; flex: none; }
.vsep { width: 1px; height: 9px; background: #444; margin-left: 7px; }
.vscroll { flex: 1; display: flex; flex-direction: column; align-items: center; position: relative; }
.vscroll .up { margin-top: 88px; }
.vbar { width: 11px; height: 421px; margin-top: 39px; border-radius: 6px; background: #5c5c5c; flex: none; }
.vscroll .down { margin-top: 50px; }
.vscroll .plus { margin: 6px 0 0; }
.hsep { width: 9px; height: 1px; background: #444; margin-top: 8px; }
.vscroll .minus { margin: 8px 0 0; }

/* transport */
.transport { height: 45px; display: flex; align-items: center; box-sizing: border-box; }
.tgroup { width: 55px; height: 24px; flex: none; border-radius: 12px; background: #343434; box-shadow: 0 0 0 1px #242424, 0 1px 2px rgba(0, 0, 0, .5); display: flex; margin-left: 5px; overflow: hidden; }
.tgroup span { flex: 1; display: flex; align-items: center; justify-content: center; }
.tgroup span + span { border-left: 1px solid #242424; }
.playbtn { width: 30px; height: 30px; margin-left: 3px; border-radius: 50%; flex: none; background: radial-gradient(circle at 50% 20%, #fafafa, #aaa 60%, #777); display: flex; align-items: center; justify-content: center; padding-left: 2px; box-sizing: border-box; box-shadow: 0 1px 2px #000; }
.loopbtn { width: 22px; height: 22px; margin-left: 4px; border-radius: 50%; flex: none; background: #1d3e3a; border: 1px solid #10a888; box-sizing: border-box; display: flex; align-items: center; justify-content: center; }
.stop { width: 9px; height: 9px; background: #8a8a8a; }
.pause { width: 9px; height: 10px; border-left: 3px solid #8a8a8a; border-right: 3px solid #8a8a8a; box-sizing: border-box; }
.bigtime { width: 378px; margin-left: 9px; font: bold 21.5px "Liberation Sans", sans-serif; color: #7a7a7a; flex: none; white-space: nowrap; }
.stopped { width: 802px; flex: none; font-size: 14.5px; color: #707070; }
.sel { flex: none; font-size: 11.5px; color: #888; }
.sel-l { width: 77px; }
.s1, .s2 { width: 80px; }
.s3 { width: 59px; }
.box { background: #2b2b2b; height: 36px; flex: none; border-radius: 2px; display: flex; flex-direction: column; align-items: center; justify-content: center; }
.bpm { width: 50px; gap: 3px; font-size: 10.5px; line-height: 14px; }
.bpm .lt { color: #aaa; }
.sig { width: 38px; margin-left: 3px; font-size: 11.5px; }
.glob { width: 54px; margin-left: 3px; font-size: 10px; gap: 2px; }
.g1 { display: flex; align-items: center; gap: 1px; }
.g1 b { font-size: 8.5px; font-weight: 600; color: #8a8a8a; }
.g2 { width: 48px; height: 14px; background: #333; display: flex; align-items: center; justify-content: space-between; padding: 0 2px 0 5px; box-sizing: border-box; }
.caret { width: 11px; height: 11px; border-radius: 50%; background: #999; position: relative; flex: none; }
.caret::after { content: ""; position: absolute; left: 2px; top: 3px; border-left: 3.5px solid transparent; border-right: 3.5px solid transparent; border-top: 6px solid #333; }
.rateknob { width: 30px; height: 30px; margin-left: 6px; border-radius: 50%; border: 1px solid #222; box-sizing: border-box; position: relative; flex: none; background: #313131; }
.rateknob i { position: absolute; left: 14px; top: 4px; width: 1px; height: 9px; background: #999; }
.rate { display: flex; flex-direction: column; margin-left: 7px; font-size: 10.5px; gap: 3px; color: #777; }
.rv { margin-left: 3px; }

/* mixer */
.mixer { height: 260px; display: flex; }
.m-master { width: 126px; flex: none; display: flex; flex-direction: column; }
.fx-slot { height: 33px; flex: none; padding: 7px 0 0 6px; box-sizing: border-box; }
.mfx {
  width: 72px; height: 18px; display: flex; box-sizing: border-box; border: 1px solid #1c1c1c; position: relative; color: #444;
  clip-path: polygon(5px 0, 100% 0, 100% 100%, 0 100%, 0 5px);
}
.mfx.wide { width: 112px; margin-left: 1px; }
.mfx b { width: 43px; background: #404040; color: #888; font-size: 10.5px; line-height: 16px; padding-left: 8px; box-sizing: border-box; font-weight: 600; }
.mfx.wide b { width: 82px; }
.mfx span { flex: 1; background: #869090; display: flex; align-items: center; justify-content: center; }
.mfx.active b { background: #1f5a4a; color: #e2e2e2; }
.mfx.active span { color: #20e0a8; }
.mfx em { position: absolute; left: 19px; width: 40px; top: 0; height: 2px; background: #1a1a1a; }
.mfx.active em { background: #10d898; }
.mfx.wide em { left: 19px; width: 78px; }
.m-top { height: 22px; flex: none; display: flex; align-items: flex-start; padding-left: 31px; box-sizing: border-box; }
.m-top .knob { margin-top: -2px; }
.stereo { margin-left: 45px; margin-top: -2px; }
.m-body { height: 185px; flex: none; background: #282828; display: flex; border-right: 1px solid #111; box-sizing: border-box; }
.m-left { width: 67px; flex: none; display: flex; flex-direction: column; }
.db { text-align: center; margin: 6px 0 0 20px; font-size: 11.5px; color: #6a6a6a; line-height: 14px; height: 14px; }
.inf-row { display: flex; justify-content: space-around; padding: 2px 2px 0 6px; font-size: 11px; line-height: 14px; color: #bbb; }
.m-scale { display: flex; height: 123px; padding: 0 0 0 4px; font-size: 10.5px; color: #5f5f5f; justify-content: space-between; line-height: 12px; flex: none; }
.sc { display: flex; flex-direction: column; justify-content: space-between; height: 123px; box-sizing: border-box; }
.sc.mid { padding: 6px 0 4px; color: #666; }
.sc.right { align-items: flex-end; }
.rms-row { display: flex; justify-content: space-between; padding: 4px 9px 0 8px; color: #ddd; font-size: 10.5px; }
.rms-row b { font-weight: 600; }
.m-fader { width: 22px; flex: none; position: relative; }
.m-fader .fader-track { top: 36px; height: 132px; left: 11px; }
.m-fader .fader { left: 2px; }
.m-right { flex: 1; display: flex; flex-direction: column; align-items: center; padding: 6px 3px 0 0; gap: 3px; }
.spacer { height: 50px; flex: none; }
.trimbtn { width: 20px; height: 20px; background: #444; border: 1px solid #1a1a1a; box-sizing: border-box; display: flex; align-items: center; justify-content: center; clip-path: polygon(5px 0, 100% 0, 100% 100%, 0 100%, 0 5px); flex: none; }
.m-name { height: 19px; flex: none; background: #3a3a3a; display: flex; align-items: center; position: relative; }
.m-name span { flex: 1; text-align: center; padding-left: 4px; color: #a4a4a4; font-size: 11.5px; }
.info { width: 14px; height: 14px; margin-left: 2px; border-radius: 50%; border: 1px solid #888; box-sizing: border-box; font: 600 10px/12px "DejaVu Serif", serif; text-align: center; color: #999; }

.ch { width: 86px; flex: none; display: flex; flex-direction: column; position: relative; }
.ch.sel .fx-slot { background: #3a3a3a; }
.ch-head {
  height: 50px; flex: none; position: relative; overflow: hidden; border-top: 1px solid #111; border-left: 1px solid #111; box-sizing: border-box;
  display: flex; flex-direction: column; padding-top: 4px;
}
.ch-head .knob { margin: 0 0 0 31px; }
.in-pill {
  width: 41px; height: 15px; margin: 5px 0 0 5px; box-sizing: border-box; background: rgba(0, 0, 0, .18); border: 1px solid rgba(255, 255, 255, .45);
  border-radius: 0 8px 8px 0; display: flex; align-items: center; justify-content: space-between; padding: 0 1px 0 10px; color: #ddd; font-size: 10.5px;
}
.notch { position: absolute; left: 50px; top: 29px; width: 30px; height: 30px; border-radius: 50%; background: #282828; }
.chrec { position: absolute; width: 21px; height: 21px; left: 55px; top: 66px; }
.ch-body { flex: 1; background: #282828; display: flex; flex-direction: column; position: relative; }
.ch-body::before { content: ""; position: absolute; left: 0; top: 0; width: 1px; height: 138px; background: #111; }
.ch.folder .ch-body::before { height: 153px; }
.ch-top { height: 26px; display: flex; align-items: center; flex: none; }
.vol { width: 50px; text-align: center; font-size: 11.5px; color: #666; flex: none; }
.spk { margin-left: 9px; margin-top: 3px; }
.ch-mid { height: 92px; display: flex; flex: none; }
.scale { width: 24px; height: 86px; margin-left: 5px; font-size: 10.5px; line-height: 12px; color: #5f5f5f; display: flex; flex-direction: column; justify-content: space-between; flex: none; }
.scale span:first-child { color: #6a6a6a; font-size: 11px; }
.ch-fader { width: 21px; flex: none; position: relative; }
.fader-track { position: absolute; left: 8px; width: 2px; top: 10px; height: 66px; background: #0c0c0c; }
.fader { position: absolute; left: -1px; width: 20px; }
.cap-t { height: 20px; border-radius: 3px 3px 7px 7px / 3px 3px 4px 4px; background: linear-gradient(#333, #ddd 10%, #888 22%, #555 45%, #4a4a4a 80%, #333); box-shadow: 0 0 0 1px #111; }
.cap-b { height: 21px; margin-top: 1px; border-radius: 7px 7px 3px 3px / 4px 4px 3px 3px; background: linear-gradient(#333, #777 22%, #eee 50%, #888 78%, #333); box-shadow: 0 0 0 1px #111, 0 2px 3px #000; }
.ch-btns { width: 31px; flex: none; display: flex; flex-direction: column; align-items: center; gap: 3px; }
.route {
  width: 20px; height: 20px; flex: none; margin-top: 2px; border: 1px solid #111; box-sizing: border-box;
  clip-path: polygon(5px 0, 100% 0, 100% 100%, 0 100%, 0 5px);
  background: linear-gradient(105deg, #222 0 22%, #14b89a 22% 40%, #222 40% 46%, #6b6440 46% 62%, #222 62% 68%, #2a4a66 68% 88%, #222 88%);
}
.master-route { background: linear-gradient(105deg, #222 0 22%, #d8d8d0 22% 40%, #222 40% 46%, #d8c020 46% 62%, #222 62% 68%, #2a4a66 68% 88%, #222 88%); }
.route-l { color: #6e6e6e; font-size: 10.5px; line-height: 13px; }
.ch-bottom { flex: 1; display: flex; flex-direction: column; justify-content: flex-end; padding-bottom: 15px; }
.ch.folder .ch-bottom { padding-bottom: 0; }
.ch-name { text-align: center; font-size: 12px; line-height: 17px; flex: none; margin-bottom: 5px; padding-right: 2px; white-space: nowrap; }
.ch.folder .ch-name { margin-bottom: 14px; }
.ch-name.under { border-bottom: 2px solid #fff; margin-bottom: 3px; padding-right: 0; }
.band { height: 20px; flex: none; text-align: center; font-size: 12px; line-height: 20px; margin-right: 1px; position: relative; }
.band.hasfold { padding-left: 10px; }
.band.rounded { border-radius: 0 7px 7px 0; }
.band .fold { position: absolute; left: 4px; top: 4px; }
.ch.folder .band { height: 19px; }

.tabs { height: 15px; background: #3a3a3a; display: flex; align-items: center; }
.bang { width: 8px; padding-left: 3px; box-sizing: border-box; color: #bbb; font-size: 11px; }
.tab { width: 60px; height: 15px; background: #5a5a5a; clip-path: polygon(0 0, 100% 0, 92% 100%, 8% 100%); display: flex; align-items: center; padding-left: 8px; box-sizing: border-box; gap: 3px; color: #111; font-size: 10.5px; }
.tab b { font-weight: 700; }
</style>

<style>
html, body { margin: 0; background: #333; }
</style>
